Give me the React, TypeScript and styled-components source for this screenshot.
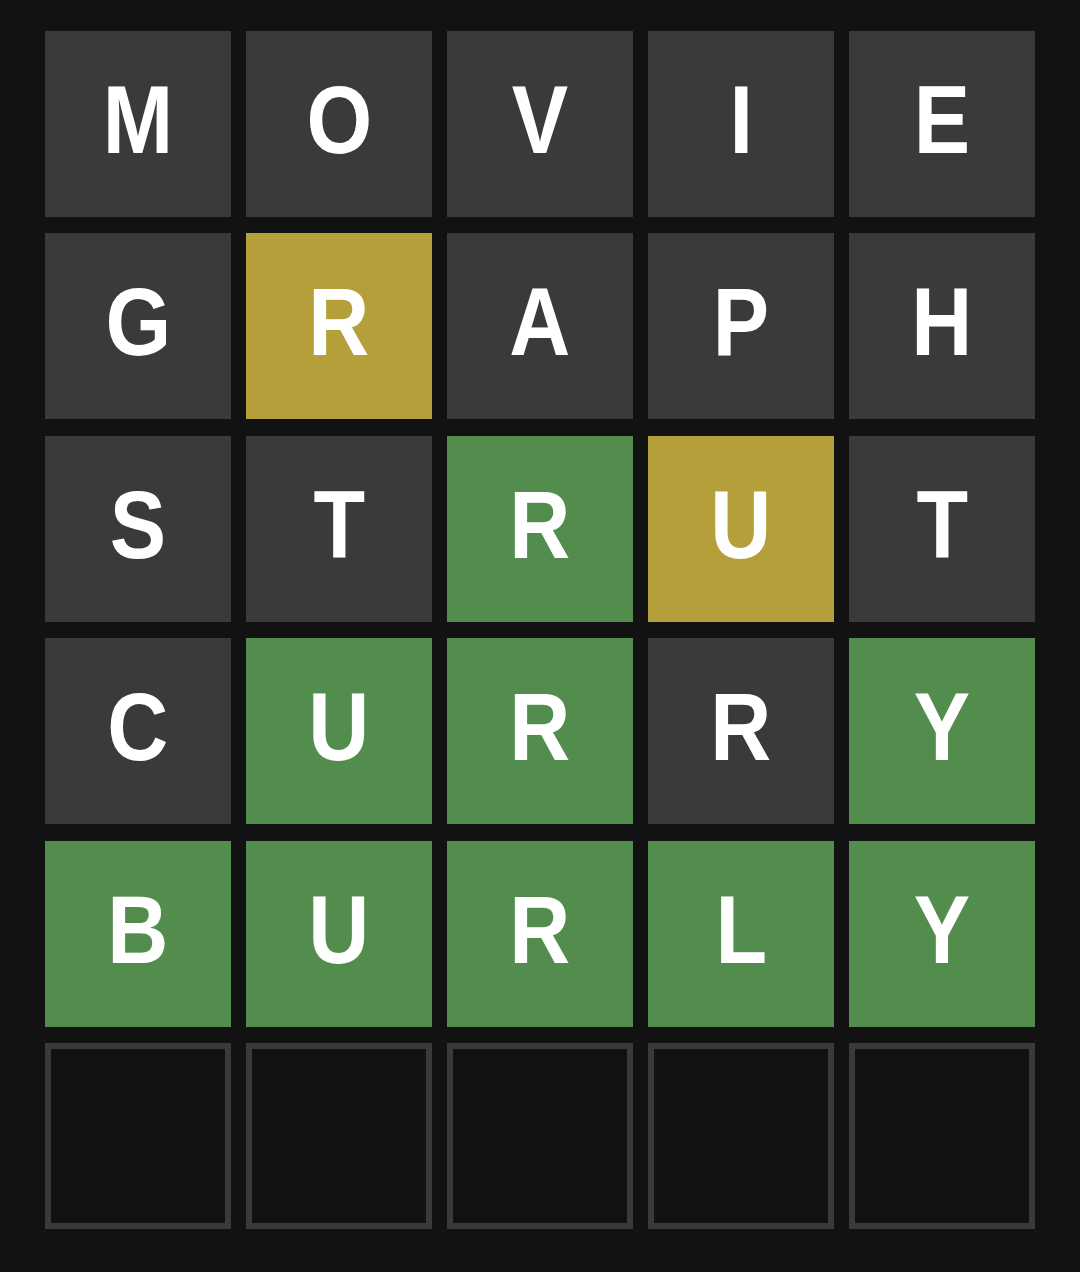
import React from "react";
import styled, { createGlobalStyle } from "styled-components";

const Global = createGlobalStyle`
  html, body { margin: 0; padding: 0; background: #121213; }
  body { font-family: "Liberation Sans", Arial, sans-serif; }
`;

type State = "absent" | "present" | "correct" | "empty";

const colors: Record<State, string> = {
  absent: "#3a3a3c",
  present: "#b59f3b",
  correct: "#538d4e",
  empty: "#121213",
};

const Page = styled.div`
  width: 1080px;
  height: 1272px;
  box-sizing: border-box;
  padding: 31px 45px 0 45px;
  background: #121213;
`;

const Board = styled.div`
  display: grid;
  grid-template-columns: repeat(5, 186px);
  grid-auto-rows: 186px;
  column-gap: 15px;
  row-gap: 16.4px;
`;

const Tile = styled.div<{ $state: State }>`
  box-sizing: border-box;
  display: flex;
  align-items: center;
  justify-content: center;
  background: ${(p) => colors[p.$state]};
  border: ${(p) => (p.$state === "empty" ? "6px solid #3a3a3c" : "none")};
  color: #ffffff;
  font-family: "Liberation Sans", Arial, sans-serif;
  font-weight: 700;
  font-size: 96px;
  line-height: 1;
  padding-bottom: 8px;
  text-transform: uppercase;
`;

const Letter = styled.span`
  display: inline-block;
  transform: scaleX(0.88);
`;

const rows: { word: string; states: State[] }[] = [
  { word: "MOVIE", states: ["absent", "absent", "absent", "absent", "absent"] },
  { word: "GRAPH", states: ["absent", "present", "absent", "absent", "absent"] },
  { word: "STRUT", states: ["absent", "absent", "correct", "present", "absent"] },
  { word: "CURRY", states: ["absent", "correct", "correct", "absent", "correct"] },
  { word: "BURLY", states: ["correct", "correct", "correct", "correct", "correct"] },
  { word: "     ", states: ["empty", "empty", "empty", "empty", "empty"] },
];

export default function App() {
  return (
    <>
      <Global />
      <Page>
        <Board>
          {rows.map((r, i) =>
            r.states.map((s, j) => (
              <Tile key={`${i}-${j}`} $state={s}>
                {r.word[j].trim() && <Letter>{r.word[j]}</Letter>}
              </Tile>
            ))
          )}
        </Board>
      </Page>
    </>
  );
}
